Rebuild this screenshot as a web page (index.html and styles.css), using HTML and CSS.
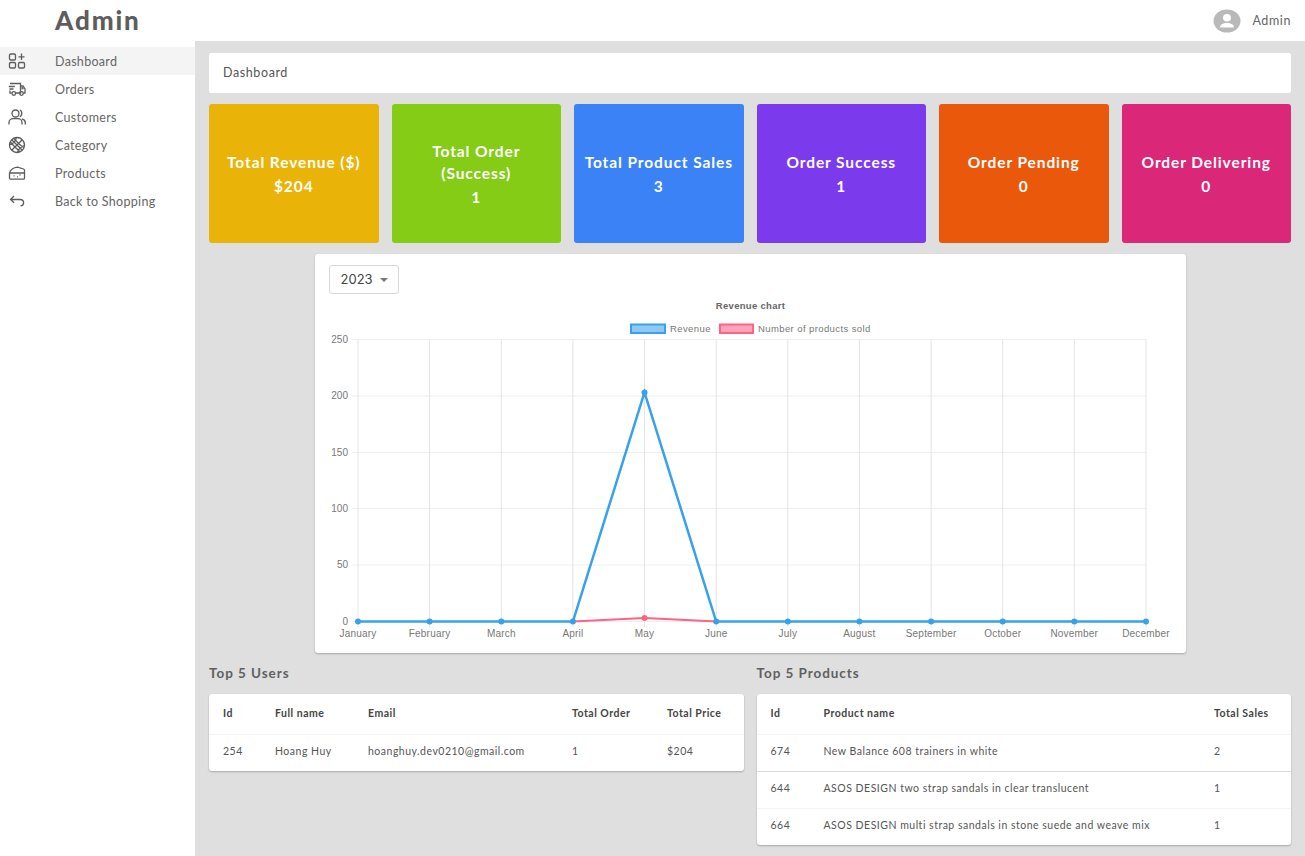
FILE: index.html
```html
<!DOCTYPE html>
<html lang="en">
<head>
<meta charset="utf-8">
<title>Admin Dashboard</title>
<link rel="stylesheet" href="styles.css">
</head>
<body>
<div class="app">
  <aside class="sidebar">
    <div class="logo">Admin</div>
    <nav class="nav">
      <a class="nav-item active">
        <svg class="nav-icon" viewBox="0 0 18 18"><rect x="1.500" y="2" width="6" height="6" rx="1.200"/><rect x="1.500" y="10.500" width="6" height="5.500" rx="1.200"/><rect x="10.500" y="10.500" width="6" height="5.500" rx="1.200"/><path d="M13.500 1.500v6.500M10.500 4.800h6"/></svg>
        <span>Dashboard</span>
      </a>
      <a class="nav-item">
        <svg class="nav-icon wide" viewBox="0 0 18 18"><path d="M2 3.500h10.500v9.500H8M3.500 13H2v-2.500M12.500 6h2.500l2 3v4h-1.500M12.500 13H11.500M.8 6.500h6M1.500 9h4"/><path class="solid" d="M13.500 7h1.200l1.300 2.200h-2.500z"/><circle cx="5.800" cy="13.500" r="1.800"/><circle cx="13.500" cy="13.500" r="1.800"/></svg>
        <span>Orders</span>
      </a>
      <a class="nav-item">
        <svg class="nav-icon" viewBox="0 0 18 18"><circle cx="7.500" cy="5.500" r="3.500"/><path d="M1 16.500v-1.800c0-2.400 2-4 4-4h5c2 0 4 1.600 4 4v1.800M11.800 2.200c2.600.6 2.600 5.700 0 6.400M14 10.900c2 .5 3.300 2 3.300 3.800v1.800"/></svg>
        <span>Customers</span>
      </a>
      <a class="nav-item">
        <svg class="nav-icon" viewBox="0 0 18 18"><circle cx="9" cy="9" r="7.500"/><path d="M3.700 3.700 14.300 14.300M14.300 3.700 3.700 14.300M1.600 8.500C4.500 7.800 7.500 5 8.500 1.600M9.500 16.400C10.500 13 13.200 10.500 16.400 9.500M6 2.300C8 5 11.500 9 15.800 11.800M2.200 6C5 9 8.500 12.500 11.800 15.800"/></svg>
        <span>Category</span>
      </a>
      <a class="nav-item">
        <svg class="nav-icon" viewBox="0 0 18 18"><path d="M1.500 9C2 6.300 5 3.500 9.500 3.200l6 1.800c.7.300 1 .8 1 1.500V14a1.200 1.200 0 0 1-1.200 1.200H2.700A1.200 1.200 0 0 1 1.500 14zM1.500 9H16.500M5.500 11.800h1M9 12.800h1M11.500 11h1"/></svg>
        <span>Products</span>
      </a>
      <a class="nav-item">
        <svg class="nav-icon" viewBox="0 0 18 18"><path d="M6 4 2.500 7.500 6 10.800M2.500 7.500H12c2.200 0 3.600 1.300 3.600 3.200 0 1.700-1.200 3-3 3.200"/></svg>
        <span>Back to Shopping</span>
      </a>
    </nav>
  </aside>

  <div class="main">
    <header class="topbar">
      <svg class="avatar" viewBox="0 0 28 24"><ellipse cx="14" cy="12" rx="13.500" ry="11.500" class="avatar-bg"/><ellipse cx="14" cy="8.800" rx="4" ry="3.800" class="avatar-fg"/><path d="M7 18.500c0-3 3-4.500 7-4.500s7 1.500 7 4.500z" class="avatar-fg"/></svg>
      <span class="user-name">Admin</span>
    </header>

    <main class="content">
      <div class="breadcrumb">Dashboard</div>

      <section class="stats">
        <div class="stat stat-yellow"><p>Total Revenue ($)</p><p>$204</p></div>
        <div class="stat stat-green"><p class="stat-narrow">Total Order (Success)</p><p>1</p></div>
        <div class="stat stat-blue"><p>Total Product Sales</p><p>3</p></div>
        <div class="stat stat-purple"><p>Order Success</p><p>1</p></div>
        <div class="stat stat-orange"><p>Order Pending</p><p>0</p></div>
        <div class="stat stat-pink"><p>Order Delivering</p><p>0</p></div>
      </section>

      <section class="chart-card">
        <div class="year-select">2023<span class="caret"></span></div>
        <svg class="chart" viewBox="0 0 871 399" width="871" height="399">
          <text class="chart-title" x="435.500" y="55">Revenue chart</text>
          <rect class="legend-blue" x="316" y="70.500" width="34" height="8.500"/>
          <text class="legend" x="355" y="78">Revenue</text>
          <rect class="legend-pink" x="405" y="70.500" width="33" height="8.500"/>
          <text class="legend" x="443" y="78">Number of products sold</text>

          <g class="grid-h">
            <path d="M37 85.500H831M37 142H831M37 198.500H831M37 254.500H831M37 311H831M37 367.500H831"/>
          </g>
          <g class="grid-v">
            <path d="M43 85V373M114.600 85V373M186.300 85V373M257.900 85V373M329.500 85V373M401.200 85V373M472.800 85V373M544.400 85V373M616.100 85V373M687.700 85V373M759.300 85V373M831 85V373"/>
          </g>

          <g class="axis-y">
            <text x="33" y="89">250</text>
            <text x="33" y="145">200</text>
            <text x="33" y="202">150</text>
            <text x="33" y="258">100</text>
            <text x="33" y="314">50</text>
            <text x="33" y="371">0</text>
          </g>
          <g class="axis-x">
            <text x="43" y="383">January</text>
            <text x="114.600" y="383">February</text>
            <text x="186.300" y="383">March</text>
            <text x="257.900" y="383">April</text>
            <text x="329.500" y="383">May</text>
            <text x="401.200" y="383">June</text>
            <text x="472.800" y="383">July</text>
            <text x="544.400" y="383">August</text>
            <text x="616.100" y="383">September</text>
            <text x="687.700" y="383">October</text>
            <text x="759.300" y="383">November</text>
            <text x="831" y="383">December</text>
          </g>

          <polyline class="line-pink" points="257.900,367.500 329.500,364 401.200,367.500"/>
          <circle class="dot-pink" cx="329.500" cy="364" r="3"/>
          <polyline class="line-blue" points="43,367.500 257.900,367.500 329.500,138.500 401.200,367.500 831,367.500"/>
          <g class="dot-blue">
            <circle cx="43" cy="367.500" r="3"/><circle cx="114.600" cy="367.500" r="3"/><circle cx="186.300" cy="367.500" r="3"/><circle cx="257.900" cy="367.500" r="3"/><circle cx="329.500" cy="138.500" r="3"/><circle cx="401.200" cy="367.500" r="3"/><circle cx="472.800" cy="367.500" r="3"/><circle cx="544.400" cy="367.500" r="3"/><circle cx="616.100" cy="367.500" r="3"/><circle cx="687.700" cy="367.500" r="3"/><circle cx="759.300" cy="367.500" r="3"/><circle cx="831" cy="367.500" r="3"/>
          </g>
        </svg>
      </section>

      <section class="tables">
        <div class="table-block">
          <h3 class="table-title">Top 5 Users</h3>
          <div class="table-card">
            <table class="data users">
              <thead><tr><th>Id</th><th>Full name</th><th>Email</th><th>Total Order</th><th>Total Price</th></tr></thead>
              <tbody><tr><td>254</td><td>Hoang Huy</td><td>hoanghuy.dev0210@gmail.com</td><td>1</td><td>$204</td></tr></tbody>
            </table>
          </div>
        </div>
        <div class="table-block">
          <h3 class="table-title">Top 5 Products</h3>
          <div class="table-card">
            <table class="data products">
              <thead><tr><th>Id</th><th>Product name</th><th>Total Sales</th></tr></thead>
              <tbody>
                <tr class="strong-line"><td>674</td><td>New Balance 608 trainers in white</td><td>2</td></tr>
                <tr><td>644</td><td>ASOS DESIGN two strap sandals in clear translucent</td><td>1</td></tr>
                <tr><td>664</td><td>ASOS DESIGN multi strap sandals in stone suede and weave mix</td><td>1</td></tr>
              </tbody>
            </table>
          </div>
        </div>
      </section>
    </main>
  </div>
</div>
</body>
</html>
```

FILE: styles.css
```css
* { box-sizing: border-box; }
html, body { margin: 0; height: 100%; }
body {
  font-family: "Lato", "Liberation Sans", sans-serif;
  color: #555;
  background: #dfdfdf;
  overflow: hidden;
}
.app { display: flex; height: 856px; }

.sidebar { width: 195px; flex: none; background: #fff; }
.logo {
  height: 47px;
  padding: 5px 0 0 55px;
  font-size: 26px;
  line-height: 30px;
  font-weight: 900;
  letter-spacing: 1.900px;
  color: #5d5d5d;
}
.nav { display: flex; flex-direction: column; }
.nav-item {
  display: flex;
  align-items: center;
  height: 28px;
  padding-left: 8px;
  font-size: 12.500px;
  letter-spacing: 0.300px;
  color: #666;
}
.nav-item.active { background: #f4f4f4; }
.nav-icon {
  width: 18px;
  height: 18px;
  margin-right: 29px;
  fill: none;
  stroke: #5c5c5c;
  stroke-width: 1.300;
  flex: none;
}
.solid { fill: #5c5c5c; stroke: none; }

.main { flex: 1; min-width: 0; display: flex; flex-direction: column; }
.topbar {
  height: 41px;
  flex: none;
  background: #fff;
  display: flex;
  align-items: center;
  justify-content: flex-end;
  padding-right: 14px;
}
.avatar { width: 28px; height: 24px; margin-right: 11px; }
.avatar-bg { fill: #b9b9b9; }
.avatar-fg { fill: #fff; }
.user-name { font-size: 12.500px; letter-spacing: 0.600px; color: #666; }

.content { padding: 12px 14px 0; }
.breadcrumb {
  height: 40px;
  background: #fff;
  border-radius: 2px;
  padding: 0 0 2px 14px;
  display: flex;
  align-items: center;
  font-size: 12.500px;
  letter-spacing: 0.600px;
  color: #555;
}

.stats {
  display: grid;
  grid-template-columns: repeat(6, 1fr);
  column-gap: 13px;
  margin-top: 11px;
}
.stat {
  height: 139px;
  border-radius: 3px;
  color: #fff;
  display: flex;
  flex-direction: column;
  align-items: center;
  justify-content: center;
  text-align: center;
  padding: 0 4px;
  font-weight: 700;
  font-size: 15.500px;
  letter-spacing: 0.900px;
  line-height: 22px;
}
.stat p { margin: 0; }
.stat p + p { margin-top: 2px; }
.stat .stat-narrow { max-width: 120px; }
.stat-yellow { background: #eab308; }
.stat-green { background: #84cc16; }
.stat-blue { background: #3b82f6; }
.stat-purple { background: #7c3aed; }
.stat-orange { background: #ea580c; }
.stat-pink { background: #db2777; }

.chart-card {
  position: relative;
  width: 871px;
  height: 399px;
  margin: 11px auto 0;
  background: #fff;
  border-radius: 3px;
  box-shadow: 0 1px 2px rgba(0, 0, 0, 0.25);
}
.chart { display: block; }
.year-select {
  position: absolute;
  left: 14px;
  top: 11px;
  width: 70px;
  height: 29px;
  border: 1px solid #d8d8d8;
  border-radius: 3px;
  display: flex;
  align-items: center;
  padding: 0 0 2px 11px;
  font-family: "Inter", "Liberation Sans", sans-serif;
  font-size: 13px;
  color: #444;
}
.caret {
  margin-left: 7px;
  margin-top: 2px;
  border-left: 4px solid transparent;
  border-right: 4px solid transparent;
  border-top: 4px solid #777;
}
.chart text { font-family: "Liberation Sans", Arial, sans-serif; }
.chart-title { font-size: 9.500px; font-weight: 700; fill: #666; text-anchor: middle; letter-spacing: 0.300px; }
.legend { font-size: 9.500px; fill: #777; letter-spacing: 0.400px; }
.legend-blue { fill: #90c8f2; stroke: #36a2eb; stroke-width: 2; }
.legend-pink { fill: #ffa3b8; stroke: #ff6384; stroke-width: 2; }
.grid-h path { stroke: #efefef; stroke-width: 1; fill: none; }
.grid-v path { stroke: #e4e4e4; stroke-width: 1; fill: none; }
.axis-y text { font-size: 10px; fill: #777; text-anchor: end; }
.axis-x text { font-size: 10px; fill: #777; text-anchor: middle; letter-spacing: 0.200px; }
.line-blue { fill: none; stroke: #36a2eb; stroke-width: 2.500; }
.line-pink { fill: none; stroke: #ff6384; stroke-width: 2; }
.dot-blue { fill: #36a2eb; }
.dot-pink { fill: #ff6384; }

.tables {
  display: grid;
  grid-template-columns: 1fr 1fr;
  column-gap: 13px;
  margin-top: 12px;
}
.table-title {
  margin: 0 0 13px;
  height: 16px;
  font-size: 13.500px;
  line-height: 16px;
  font-weight: 700;
  letter-spacing: 0.950px;
  color: #5f5f5f;
}
.table-card {
  background: #fff;
  border-radius: 3px;
  box-shadow: 0 1px 2px rgba(0, 0, 0, 0.25);
}
.data {
  width: 100%;
  border-collapse: collapse;
  table-layout: fixed;
  font-size: 10.500px;
  letter-spacing: 0.500px;
}
.data th {
  height: 40px;
  padding: 0 0 2px 14px;
  text-align: left;
  font-weight: 700;
  color: #444;
  border-bottom: 1px solid #f4f4f4;
}
.data td {
  height: 37px;
  padding: 0 0 3px 14px;
  color: #555;
  border-bottom: 1px solid #f4f4f4;
}
.data tr:last-child td { border-bottom: 0; }
.data .strong-line td { border-bottom-color: #dcdcdc; }
.users th:nth-child(1) { width: 52px; }
.users th:nth-child(2) { width: 93px; }
.users th:nth-child(3) { width: 204px; }
.users th:nth-child(4) { width: 95px; }
.products th:nth-child(1) { width: 53px; }
.products th:nth-child(3) { width: 91px; }
```
